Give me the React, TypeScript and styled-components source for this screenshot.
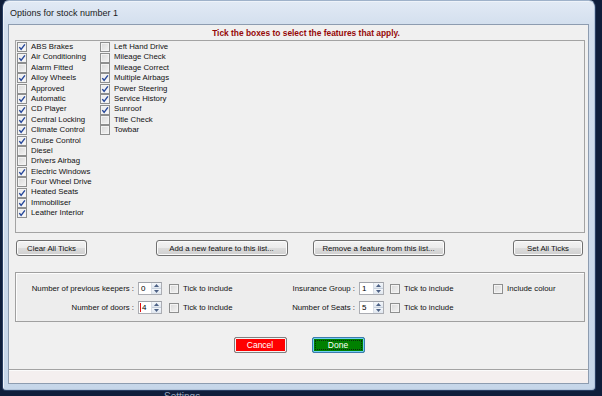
import React from "react";
import styled, { createGlobalStyle } from "styled-components";

const GlobalStyle = createGlobalStyle`
  html, body { margin: 0; padding: 0; background: #0e1d3a; }
  body { font-family: "Liberation Sans", Arial, sans-serif; color: #000; }
  #root { width: 602px; height: 396px; overflow: hidden; }
`;

const features: [string, boolean][] = [
  ["ABS Brakes", true],
  ["Air Conditioning", true],
  ["Alarm Fitted", false],
  ["Alloy Wheels", true],
  ["Approved", false],
  ["Automatic", true],
  ["CD Player", true],
  ["Central Locking", true],
  ["Climate Control", true],
  ["Cruise Control", true],
  ["Diesel", false],
  ["Drivers Airbag", false],
  ["Electric Windows", true],
  ["Four Wheel Drive", false],
  ["Heated Seats", true],
  ["Immobiliser", true],
  ["Leather Interior", true],
  ["Left Hand Drive", false],
  ["Mileage Check", false],
  ["Mileage Correct", false],
  ["Multiple Airbags", true],
  ["Power Steering", true],
  ["Service History", true],
  ["Sunroof", true],
  ["Title Check", false],
  ["Towbar", false],
];

const Screen = styled.div`
  width: 602px;
  height: 396px;
  background: #0f1e3b;
  display: flex;
  flex-direction: column;
  overflow: hidden;
`;

const Window = styled.div`
  margin-left: 2px;
  width: 594px;
  height: 391px;
  flex: none;
  box-sizing: border-box;
  border: 1px solid #2a3f63;
  border-top-color: #9fb2ca;
  border-radius: 7px 7px 4px 4px;
  background: linear-gradient(180deg, #e2eaf5 0px, #d3dfee 24px, #c6d6e9 100%);
  box-shadow: inset 1px 1px 0 #eef3fa, inset -1px -1px 0 #b3c4da;
  padding: 0 6px 6px 5px;
  display: flex;
  flex-direction: column;
`;

const TitleBar = styled.div`
  height: 23px;
  display: flex;
  align-items: center;
  padding-left: 2px;
  font-size: 9px;
  color: #1b1b1b;
  white-space: nowrap;
`;

const Client = styled.div`
  flex: 1;
  box-sizing: border-box;
  border: 1px solid #8d9cb0;
  background: #f0f0f0;
  display: flex;
  flex-direction: column;
  min-height: 0;
`;

const Heading = styled.div`
  height: 15px;
  box-sizing: border-box;
  padding: 2px 0 0 15px;
  line-height: 13px;
  text-align: center;
  font-size: 8.4px;
  font-weight: bold;
  color: #950808;
  white-space: nowrap;
`;

const ListBox = styled.div`
  margin: 0 3px 0 6px;
  height: 193px;
  box-sizing: border-box;
  border: 1px solid #a3a3a3;
  background: #f0f0f0;
  padding: 1px;
  display: grid;
  grid-auto-flow: column;
  grid-template-rows: repeat(17, 10.4px);
  grid-auto-columns: 83px;
  align-content: start;
`;

const Item = styled.label`
  display: flex;
  align-items: center;
  gap: 4px;
  font-size: 7.8px;
  line-height: 10.4px;
  white-space: nowrap;
  color: #111;
`;

const Box = styled.span<{ $checked: boolean }>`
  box-sizing: border-box;
  width: 10px;
  height: 10px;
  flex: none;
  border: 1px solid #8e8f8f;
  background: ${(p) =>
    p.$checked
      ? "linear-gradient(135deg, #e8e8e8 0%, #fbfbfb 100%)"
      : "linear-gradient(135deg, #d8d8d8 0%, #f4f4f4 100%)"};
  box-shadow: inset 0 0 0 1px #f3f3f3;
  display: flex;
  align-items: center;
  justify-content: center;
`;

const CheckBox = ({ checked }: { checked: boolean }) => (
  <Box $checked={checked}>
    {checked && (
      <svg width="8" height="8" viewBox="0 0 8 8">
        <path d="M1.3 4.1 L3.1 6.3 L6.9 1.3" fill="none" stroke="#26479a" strokeWidth="1.4" />
      </svg>
    )}
  </Box>
);

const ButtonRow = styled.div`
  margin: 7px 5px 0 7px;
  height: 16px;
  display: flex;
  justify-content: space-between;
`;

const ButtonPair = styled.div`
  display: flex;
  gap: 25px;
`;

const Button = styled.button<{ $w: number }>`
  width: ${(p) => p.$w}px;
  height: 16px;
  box-sizing: border-box;
  padding: 0;
  border: 1px solid #707070;
  border-radius: 3px;
  background: linear-gradient(180deg, #f3f3f3 0%, #ebebeb 48%, #dcdcdc 52%, #cfcfcf 100%);
  box-shadow: inset 0 0 0 1px #fbfbfb;
  font-family: "Liberation Sans", Arial, sans-serif;
  font-size: 7.8px;
  color: #111;
  white-space: nowrap;
`;

const GroupBox = styled.div`
  margin: 16px 3px 0 6px;
  height: 50px;
  box-sizing: border-box;
  border: 1px solid #a0a0a0;
  box-shadow: inset 1px 1px 0 #fdfdfd;
  background: #ededed;
  padding: 9px 0 0 14px;
  display: grid;
  grid-template-columns: 108px 24px 108px 89px 25px 109px auto;
  grid-template-rows: 13px 13px;
  row-gap: 6px;
  align-items: center;
`;

const FieldLabel = styled.span`
  text-align: right;
  padding-right: 4px;
  font-size: 7.8px;
  white-space: nowrap;
  color: #111;
`;

const Tick = styled.label<{ $pad: number }>`
  display: flex;
  align-items: center;
  gap: 4px;
  padding-left: ${(p) => p.$pad}px;
  font-size: 7.8px;
  white-space: nowrap;
  color: #111;
`;

const Spin = styled.div`
  height: 13px;
  box-sizing: border-box;
  display: flex;
  border: 1px solid #abadb3;
  border-top-color: #9ea1a8;
  background: #fff;
`;

const SpinValue = styled.span<{ $caret: boolean }>`
  flex: 1;
  display: flex;
  align-items: center;
  padding-left: ${(p) => (p.$caret ? 1 : 2)}px;
  font-size: 8px;
  line-height: 11px;
  &::before {
    content: "";
    display: ${(p) => (p.$caret ? "block" : "none")};
    width: 1px;
    height: 9px;
    margin-right: 1px;
    background: #e01010;
  }
`;

const SpinButtons = styled.span`
  width: 9px;
  display: flex;
  flex-direction: column;
  border-left: 1px solid #d9dee6;
`;

const SpinBtn = styled.span`
  flex: 1;
  display: flex;
  align-items: center;
  justify-content: center;
  background: linear-gradient(180deg, #f4f7fb, #dfe6ef);
  border: 1px solid #c5cfdc;
  border-width: 0 0 1px 0;
  &:last-child { border-bottom: 0; }
`;

const Spinner = ({ value, caret = false }: { value: string; caret?: boolean }) => (
  <Spin>
    <SpinValue $caret={caret}>{value}</SpinValue>
    <SpinButtons>
      <SpinBtn>
        <svg width="5" height="3" viewBox="0 0 5 3">
          <path d="M0 3 L2.5 0 L5 3 Z" fill="#4d6185" />
        </svg>
      </SpinBtn>
      <SpinBtn>
        <svg width="5" height="3" viewBox="0 0 5 3">
          <path d="M0 0 L2.5 3 L5 0 Z" fill="#4d6185" />
        </svg>
      </SpinBtn>
    </SpinButtons>
  </Spin>
);

const ActionRow = styled.div`
  margin-top: 15px;
  display: flex;
  justify-content: center;
  gap: 25px;
  padding-left: 1px;
`;

const ActionButton = styled.button<{ $kind: "cancel" | "done" }>`
  width: 53px;
  height: 16px;
  box-sizing: border-box;
  padding: 0;
  border: 1px solid ${(p) => (p.$kind === "done" ? "#3d7bad" : "#808080")};
  border-radius: 2px;
  background: ${(p) => (p.$kind === "done" ? "#008000" : "#ff0000")};
  box-shadow: inset 0 0 0 1px ${(p) => (p.$kind === "done" ? "#6fd0f4" : "#f4f4f4")};
  outline: ${(p) => (p.$kind === "done" ? "1px dotted #0a2a0a" : "none")};
  outline-offset: -4px;
  font-family: "Liberation Sans", Arial, sans-serif;
  font-size: 8.5px;
  color: #fff;
`;

const Spacer = styled.div`
  flex: 1;
`;

const StatusBar = styled.div`
  height: 13px;
  border-top: 1px solid #a3a3a3;
  box-shadow: inset 0 1px 0 #fbfbfb;
  background: #f4efef;
`;

const BehindStrip = styled.div`
  height: 5px;
  overflow: hidden;
  padding-left: 164px;
  font-size: 10px;
  line-height: 12px;
  color: #9aa7bd;
  white-space: nowrap;
`;

export default function App() {
  return (
    <>
      <GlobalStyle />
      <Screen>
        <Window>
          <TitleBar>Options for stock number 1</TitleBar>
          <Client>
            <Heading>Tick the boxes to select the features that apply.</Heading>
            <ListBox>
              {features.map(([name, checked]) => (
                <Item key={name}>
                  <CheckBox checked={checked} />
                  {name}
                </Item>
              ))}
            </ListBox>
            <ButtonRow>
              <Button $w={71}>Clear All Ticks</Button>
              <ButtonPair>
                <Button $w={132}>Add a new feature to this list...</Button>
                <Button $w={132}>Remove a feature from this list...</Button>
              </ButtonPair>
              <Button $w={70}>Set All Ticks</Button>
            </ButtonRow>
            <GroupBox>
              <FieldLabel>Number of previous keepers :</FieldLabel>
              <Spinner value="0" />
              <Tick $pad={7}>
                <CheckBox checked={false} />
                Tick to include
              </Tick>
              <FieldLabel>Insurance Group :</FieldLabel>
              <Spinner value="1" />
              <Tick $pad={6}>
                <CheckBox checked={false} />
                Tick to include
              </Tick>
              <Tick $pad={0}>
                <CheckBox checked={false} />
                Include colour
              </Tick>
              <FieldLabel>Number of doors :</FieldLabel>
              <Spinner value="4" caret />
              <Tick $pad={7}>
                <CheckBox checked={false} />
                Tick to include
              </Tick>
              <FieldLabel>Number of Seats :</FieldLabel>
              <Spinner value="5" />
              <Tick $pad={6}>
                <CheckBox checked={false} />
                Tick to include
              </Tick>
            </GroupBox>
            <ActionRow>
              <ActionButton $kind="cancel">Cancel</ActionButton>
              <ActionButton $kind="done">Done</ActionButton>
            </ActionRow>
            <Spacer />
            <StatusBar />
          </Client>
        </Window>
        <BehindStrip>Settings</BehindStrip>
      </Screen>
    </>
  );
}
